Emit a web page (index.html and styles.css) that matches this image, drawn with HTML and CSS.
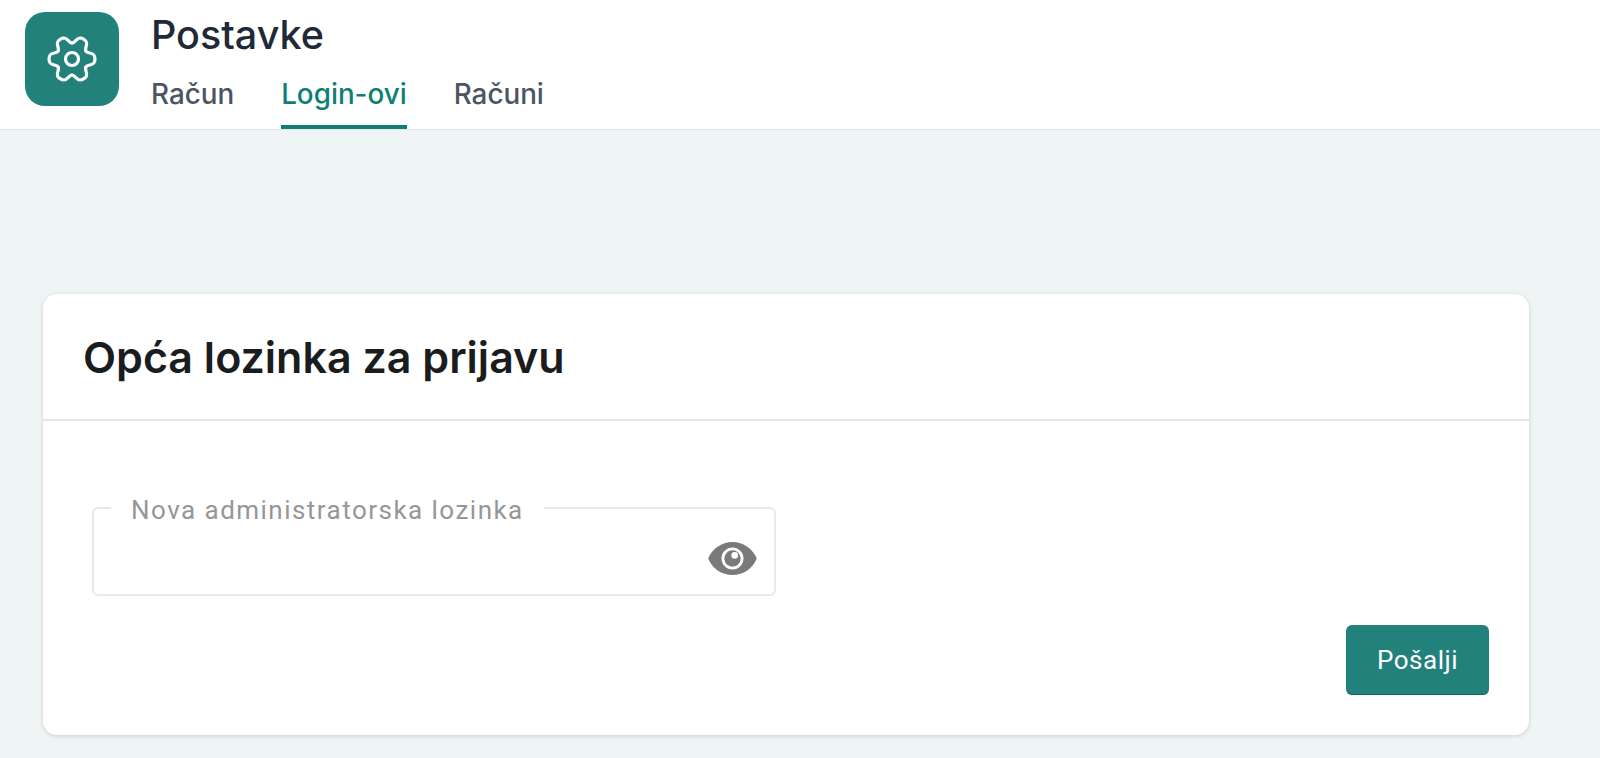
FILE: index.html
```html
<!DOCTYPE html>
<html lang="en">
<head>
    <meta charset="UTF-8">
    <title>Postavke</title>
    <link rel="stylesheet" href="styles.css">
</head>
<body>

<header class="top-bar">
    <div class="app-icon">
        <svg width="50" height="50" viewBox="-25 -25 50 50" fill="none" stroke="#fff" stroke-width="3.2" stroke-linecap="round" stroke-linejoin="round">
            <defs>
                <path id="lobe" d="M13.86-8C16-4.5 23-8 23 0S16 4.500 13.860 8"/>
            </defs>
            <use href="#lobe"/>
            <use href="#lobe" transform="rotate(60)"/>
            <use href="#lobe" transform="rotate(120)"/>
            <use href="#lobe" transform="rotate(180)"/>
            <use href="#lobe" transform="rotate(240)"/>
            <use href="#lobe" transform="rotate(300)"/>
            <circle r="6.500"/>
        </svg>
    </div>
    <div class="top-text">
        <h1 class="page-title">Postavke</h1>
        <nav class="tabs">
            <a href="#" class="tab">Račun</a>
            <a href="#" class="tab active">Login-ovi</a>
            <a href="#" class="tab">Računi</a>
        </nav>
    </div>
</header>

<main class="card">
    <h2 class="card-title">Opća lozinka za prijavu</h2>
    <form class="card-body">
        <fieldset class="field">
            <legend class="field-label">Nova administratorska lozinka</legend>
            <input type="password" class="field-input" aria-label="Nova administratorska lozinka">
            <svg class="eye" width="53" height="53" viewBox="0 0 24 24">
                <path fill="#7a7a7a" d="M12 4.5C7 4.500 2.730 7.610 1 12c1.730 4.390 6 7.500 11 7.500s9.270-3.110 11-7.500c-1.730-4.390-6-7.500-11-7.500zM12 17c-2.760 0-5-2.240-5-5s2.240-5 5-5 5 2.240 5 5-2.240 5-5 5z"/>
                <circle cx="12" cy="12" r="3.700" fill="#7a7a7a"/>
                <circle cx="13" cy="10.600" r="1.500" fill="#fff"/>
            </svg>
        </fieldset>
        <div class="actions">
            <button type="button" class="send-btn">Pošalji</button>
        </div>
    </form>
</main>

</body>
</html>
```

FILE: styles.css
```css
body {
    margin: 0;
    padding: 0;
    height: 758px;
    overflow: hidden;
    background-color: #eff5f5;
    font-family: Inter, "Liberation Sans", sans-serif;
}
.top-bar {
    display: flex;
    height: 117px;
    padding: 12px 0 0 25px;
    background-color: #fff;
    border-bottom: 1px solid #e4eaea;
}
.app-icon {
    display: flex;
    align-items: center;
    justify-content: center;
    width: 94px;
    height: 94px;
    border-radius: 20px;
    background-color: #22817a;
}
.top-text {
    margin-left: 32px;
}
.page-title {
    margin: 0;
    font-size: 39.5px;
    line-height: 46px;
    font-weight: 500;
    color: #1f2937;
}
.tabs {
    display: flex;
    gap: 47px;
    margin-top: 11px;
}
.tab {
    height: 60px;
    line-height: 50px;
    box-sizing: border-box;
    font-size: 27.8px;
    font-weight: 500;
    color: #4b5563;
    text-decoration: none;
}
.tab.active {
    color: #0f7f75;
    border-bottom: 4px solid #0f7f75;
}
.card {
    margin: 164px 0 0 43px;
    width: 1486px;
    height: 441px;
    background-color: #fff;
    border-radius: 14px;
    box-shadow: 0 1px 4px rgba(0, 0, 0, 0.16);
}
.card-title {
    margin: 0;
    height: 127px;
    padding-left: 40px;
    box-sizing: border-box;
    line-height: 127px;
    font-size: 43px;
    font-weight: 600;
    color: #1a1c1e;
    border-bottom: 2px solid #e2e6ea;
}
.card-body {
    padding: 72px 40px 0 49px;
}
.field {
    position: relative;
    width: 684px;
    height: 103px;
    margin: 0;
    padding: 0 17px;
    box-sizing: border-box;
    border: 2px solid #e7e9ea;
    border-radius: 6px;
}
.field-label {
    padding: 4px 20px 0;
    font-family: Roboto, sans-serif;
    font-size: 26px;
    line-height: 26px;
    letter-spacing: 1.47px;
    color: #939799;
}
.field-input {
    display: block;
    width: 590px;
    height: 50px;
    border: none;
    outline: none;
    background: none;
}
.eye {
    position: absolute;
    right: 15px;
    top: 9px;
}
.actions {
    display: flex;
    justify-content: flex-end;
    margin-top: 29px;
}
.send-btn {
    width: 143px;
    height: 70px;
    border: none;
    border-bottom: 1px solid #0f635d;
    border-radius: 6px;
    background-color: #22817a;
    color: #fff;
    font-family: Roboto, sans-serif;
    font-size: 26px;
    letter-spacing: 0.5px;
    cursor: pointer;
}
```
